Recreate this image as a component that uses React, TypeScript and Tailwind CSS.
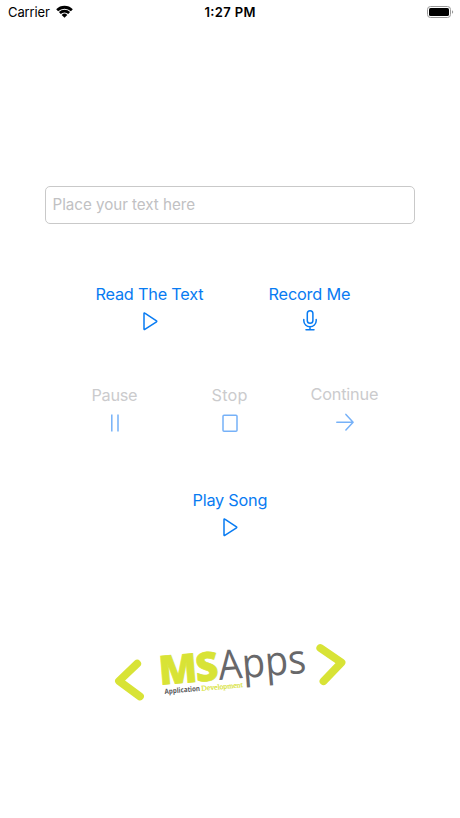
import type { ReactNode } from 'react';
import clsx from 'clsx';

interface ActionButtonProps {
  label: string;
  labelWidth: number;
  icon: ReactNode;
  disabled?: boolean;
  className?: string;
}

function ActionButton({ label, labelWidth, icon, disabled, className }: ActionButtonProps) {
  return (
    <button
      type="button"
      disabled={disabled}
      className={clsx(
        'flex flex-col items-center',
        disabled ? 'text-[#76b1f8]' : 'text-[#087bf2]',
        className,
      )}
    >
      <svg height="24" className="overflow-visible" style={{ width: labelWidth }}>
        <text
          x="-0.5"
          y="17.7"
          textLength={labelWidth}
          fontSize="16.3"
          className={disabled ? 'fill-[#cbcbcd]' : 'fill-[#087bf2]'}
        >
          {label}
        </text>
      </svg>
      <span className={disabled ? 'mt-1' : 'mt-[3px]'}>{icon}</span>
    </button>
  );
}

interface GlyphProps {
  children: ReactNode;
}

function Glyph({ children }: GlyphProps) {
  return (
    <svg
      width="24"
      height="24"
      viewBox="0 0 24 24"
      fill="none"
      stroke="currentColor"
      strokeWidth="1.5"
      strokeLinecap="round"
      strokeLinejoin="round"
    >
      {children}
    </svg>
  );
}

function PlayIcon() {
  return (
    <Glyph>
      <path d="M6 4.4v15.7c0 .4.4.6.8.3l11.7-7.6c.4-.3.4-.7 0-1L6.8 4.1c-.4-.3-.8-.1-.8.3z" />
    </Glyph>
  );
}

function MicIcon() {
  return (
    <Glyph>
      <rect x="9.3" y="1.8" width="5.6" height="12.4" rx="2.8" />
      <path d="M5.8 10.6v1.2a6.2 6 0 0 0 12.4 0v-1.2M12 17.8v3M8 20.8h8" />
    </Glyph>
  );
}

function PauseIcon() {
  return (
    <Glyph>
      <path d="M8.8 3.4v17M15 3.4v17" strokeLinecap="butt" />
    </Glyph>
  );
}

function StopIcon() {
  return (
    <Glyph>
      <rect x="5" y="4.2" width="14" height="16" rx="1" />
    </Glyph>
  );
}

function ArrowIcon() {
  return (
    <Glyph>
      <path d="M3.8 12.2h16M12.9 4.4l7.2 7.8-7.2 7.8" />
    </Glyph>
  );
}

function StatusBar() {
  return (
    <header className="grid h-6 grid-cols-3 items-center pr-1.5 pl-2 text-black">
      <div className="flex items-center gap-1.5">
        <svg width="42" height="24" className="overflow-visible">
          <text x="0" y="16.7" textLength="42" fontSize="13">
            Carrier
          </text>
        </svg>
        <svg width="17" height="13" viewBox="0 0 17 13" className="-mt-px">
          <path d="M.2 4.2a11.8 11.8 0 0 1 16.6 0l-1.9 2.1a9.1 9.1 0 0 0-12.8 0z" />
          <path d="M2.9 7.1a8 8 0 0 1 11.2 0l-1.9 2a5.2 5.2 0 0 0-7.4 0z" />
          <path d="M5.7 9.9a4 4 0 0 1 5.6 0l-2.8 2.8z" />
        </svg>
      </div>
      <svg width="51" height="24" className="justify-self-center overflow-visible">
        <text x="-0.5" y="16.7" textLength="51" fontSize="13" fontWeight="600">
          1:27 PM
        </text>
      </svg>
      <svg width="28" height="14" viewBox="0 0 28 14" className="justify-self-end">
        <rect x="1.5" y="1.5" width="23" height="11" rx="3" fill="none" stroke="#999" />
        <rect x="3" y="3" width="20" height="8" rx="1.6" />
        <path d="M26 5.2c1.6.7 1.6 2.9 0 3.6z" fill="#999" />
      </svg>
    </header>
  );
}

function Logo() {
  return (
    <svg width="240" height="70" viewBox="110 638 240 70" className="overflow-visible">
      <g fill="none" stroke="#d8e336" strokeWidth="7.8" strokeLinecap="round" strokeLinejoin="round">
        <path d="M137.2 663.6 119 681l21 15.5" />
        <path d="M320.3 648 341.5 662.5 323.5 681.2" />
      </g>
      <g transform="translate(162 684.5) rotate(-4.6)">
        <text
          x="-2"
          textLength="58"
          lengthAdjust="spacingAndGlyphs"
          fontSize="40"
          fontWeight="800"
          letterSpacing="-1.5"
          fill="#d8e336"
          stroke="#d8e336"
          strokeWidth="0.8"
          className="font-['Open_Sans',sans-serif]"
        >
          MS
        </text>
        <text
          x="57.5"
          textLength="88"
          lengthAdjust="spacingAndGlyphs"
          fontSize="41"
          fill="#68686a"
          className="font-['Open_Sans',sans-serif]"
        >
          Apps
        </text>
      </g>
      <g transform="translate(164.8 694) rotate(-5)">
        <text
          textLength="35.5"
          lengthAdjust="spacingAndGlyphs"
          fontSize="7.2"
          fontWeight="700"
          fill="#58585a"
          className="font-['Open_Sans',sans-serif]"
        >
          Application
        </text>
        <text
          x="36.8"
          textLength="41.5"
          lengthAdjust="spacingAndGlyphs"
          fontSize="7.4"
          fill="#d8e336"
          stroke="#d8e336"
          strokeWidth="0.2"
          className="font-['Liberation_Serif',serif]"
        >
          Development
        </text>
      </g>
    </svg>
  );
}

export default function App() {
  return (
    <div className="flex h-[818px] w-[460px] flex-col bg-white font-['Inter',sans-serif]">
      <StatusBar />

      <main className="flex flex-col items-center">
        <div className="mt-[162px] flex h-[38px] w-[370px] items-center rounded-[5px] border border-[#c9c9c9] pl-[7px]">
          <svg width="143" height="24" className="overflow-visible">
            <text x="-0.5" y="16.7" textLength="142.5" fontSize="15.2" fill="#c1c1c3">
              Place your text here
            </text>
          </svg>
        </div>

        <div className="mt-[58px] grid grid-cols-[160px_160px]">
          <ActionButton label="Read The Text" labelWidth={108} icon={<PlayIcon />} />
          <ActionButton label="Record Me" labelWidth={82} icon={<MicIcon />} />
        </div>

        <div className="mt-[49px] grid grid-cols-[115px_115px_115px] items-start">
          <ActionButton label="Pause" labelWidth={46} icon={<PauseIcon />} disabled className="mt-px" />
          <ActionButton label="Stop" labelWidth={36} icon={<StopIcon />} disabled className="mt-px" />
          <ActionButton label="Continue" labelWidth={68} icon={<ArrowIcon />} disabled />
        </div>

        <div className="mt-[53px]">
          <ActionButton label="Play Song" labelWidth={75} icon={<PlayIcon />} />
        </div>

        <div className="mt-[99px]">
          <Logo />
        </div>
      </main>
    </div>
  );
}
